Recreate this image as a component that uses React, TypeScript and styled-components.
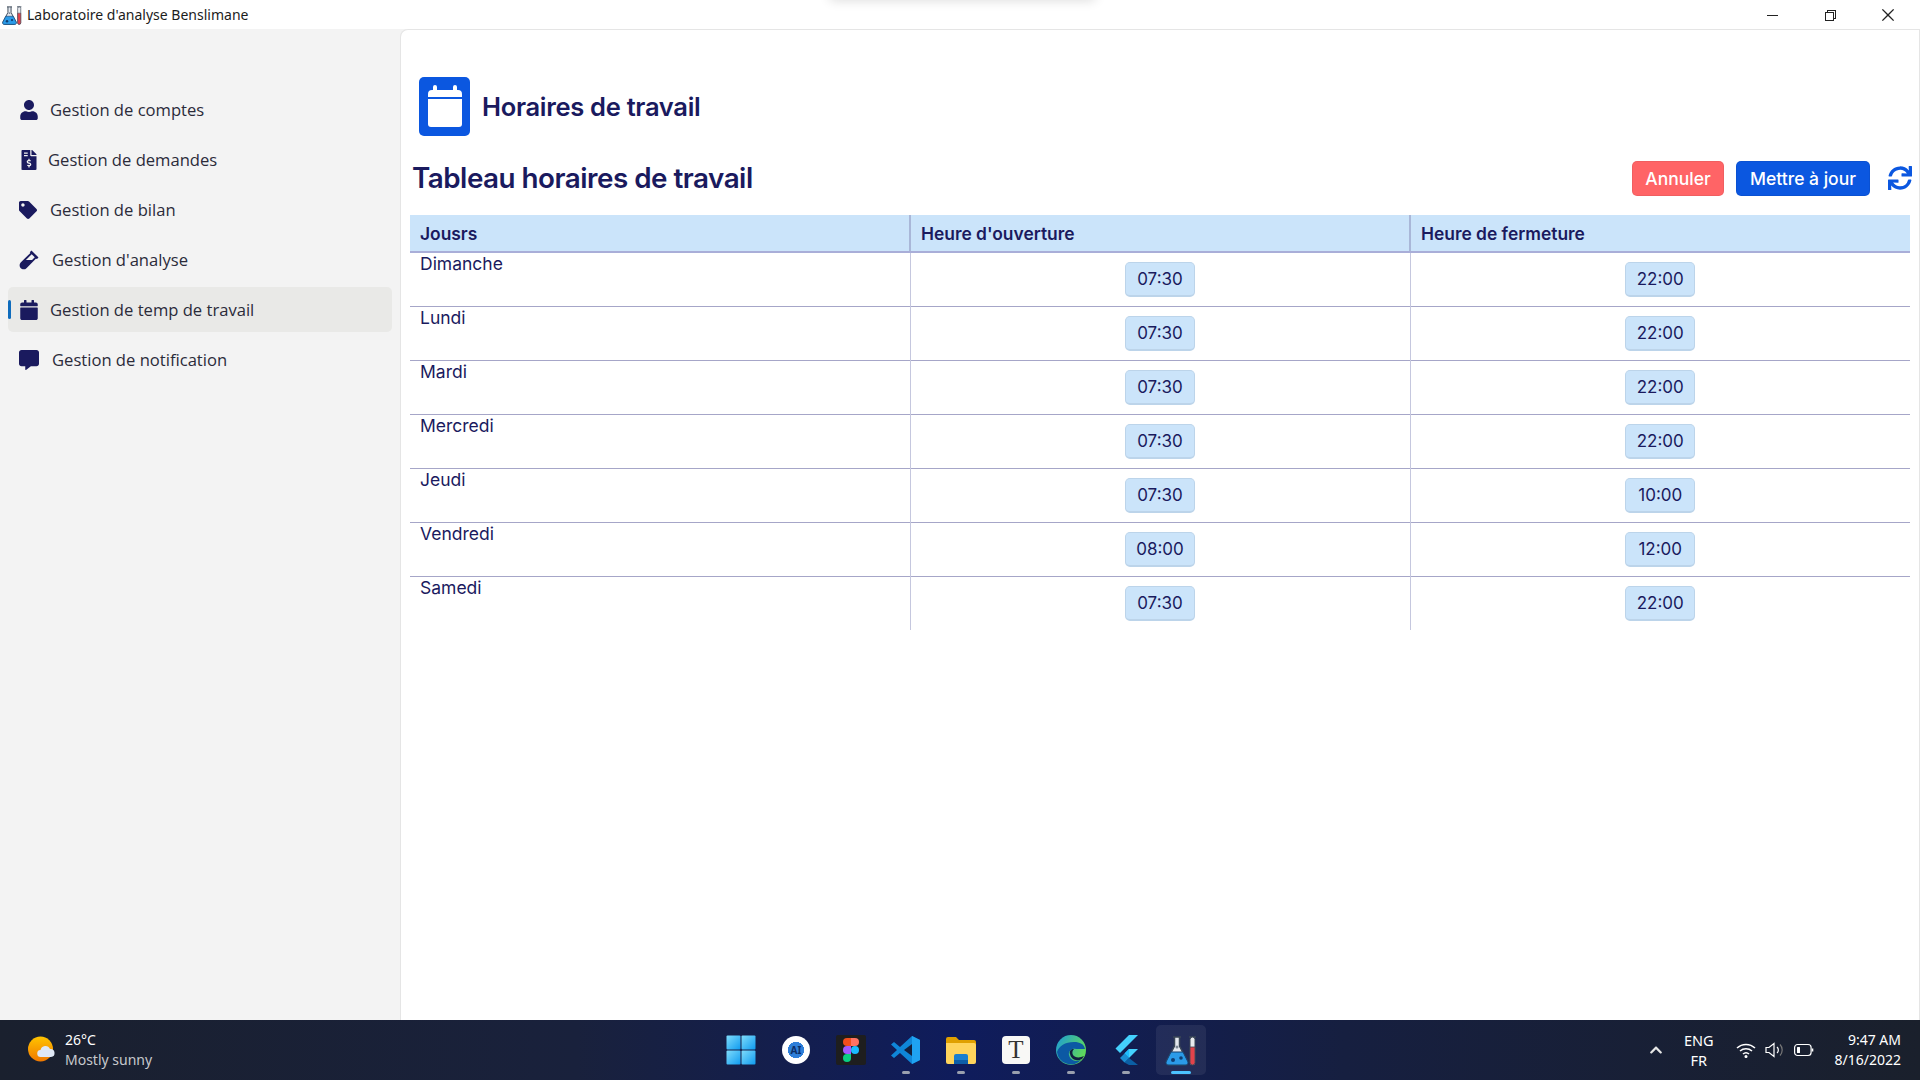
import React from 'react';
import styled, { createGlobalStyle } from 'styled-components';
import { FaUser, FaFileInvoiceDollar, FaTag, FaVial, FaCalendar, FaCommentAlt, FaSync, FaChevronUp } from 'react-icons/fa';
import { VscChromeMinimize, VscChromeRestore, VscChromeClose } from 'react-icons/vsc';

const GlobalStyle = createGlobalStyle`
  html, body {
    height: 100%;
    margin: 0;
    overflow: hidden;
  }
  * { box-sizing: border-box; }
`;

const NAVY = '#1a1a5e';
const BLUE = '#0b57e0';

const Page = styled.div`
  display: flex;
  flex-direction: column;
  width: 1920px;
  height: 1080px;
  background: #f3f3f3;
  font-family: "Open Sans", "Noto Sans", sans-serif;
`;

const TitleBar = styled.div`
  position: relative;
  display: flex;
  align-items: center;
  height: 29px;
  flex: none;
  background: #fff;
  padding-left: 2px;
  overflow: hidden;
`;

const TopShadow = styled.div`
  position: absolute;
  left: 830px;
  top: -10px;
  width: 265px;
  height: 10px;
  box-shadow: 0 0 12px rgba(0, 0, 0, 0.16);
`;

const TitleText = styled.span`
  margin-left: 5px;
  font-size: 14px;
  color: #1c1c1c;
  font-family: "Noto Sans", sans-serif;
`;

const WindowButtons = styled.div`
  display: flex;
  margin-left: auto;
  padding-right: 3px;
`;

const WindowButton = styled.div`
  display: flex;
  align-items: center;
  justify-content: center;
  width: 58px;
  height: 29px;
  font-size: 16px;
  color: #222;
`;

const Body = styled.div`
  display: flex;
  flex: 1;
  min-height: 0;
`;

const Sidebar = styled.nav`
  display: flex;
  flex-direction: column;
  width: 400px;
  flex: none;
  padding: 58px 8px 0;
  gap: 5px;
`;

const NavItem = styled.div<{ $active?: boolean; $gap: number }>`
  position: relative;
  display: flex;
  align-items: center;
  gap: ${(p) => p.$gap}px;
  height: 45px;
  padding-left: 11px;
  border-radius: 5px;
  background: ${(p) => (p.$active ? '#e9e9e7' : 'transparent')};
  color: #2b2b3a;
  font-size: 16.6px;
  svg { color: ${NAVY}; flex: none; }
  ${(p) =>
    p.$active &&
    `&::before {
      content: '';
      position: absolute;
      left: 0;
      top: 13px;
      width: 3px;
      height: 19px;
      border-radius: 2px;
      background: #0f6cbd;
    }`}
`;

const Content = styled.main`
  flex: 1;
  min-width: 0;
  background: #fff;
  border-top: 1px solid #e5e5e5;
  border-left: 1px solid #e5e5e5;
  border-right: 1px solid #e5e5e5;
  border-top-left-radius: 8px;
  padding: 48px 9px 0;
  font-family: Inter, "Noto Sans", sans-serif;
  color: ${NAVY};
`;

const PageHeader = styled.div`
  display: flex;
  align-items: center;
  gap: 12px;
  padding-left: 9px;
  height: 56px;
`;

const HeaderIcon = styled.div`
  display: flex;
  align-items: center;
  justify-content: center;
  flex: none;
  width: 51px;
  height: 59px;
  border-radius: 5px;
  background: ${BLUE};
`;

const PageTitle = styled.h1`
  margin: 0;
  font-size: 25.5px;
  font-weight: 600;
  letter-spacing: -0.3px;
`;

const ToolRow = styled.div`
  display: flex;
  align-items: center;
  height: 36px;
  margin-top: 26px;
  margin-bottom: 19px;
  padding-left: 2px;
`;

const TableTitle = styled.h2`
  margin: 0 auto 0 0;
  font-size: 27.8px;
  font-weight: 600;
  letter-spacing: -0.5px;
`;

const ActionButton = styled.button<{ $bg: string; $w: number }>`
  width: ${(p) => p.$w}px;
  height: 35px;
  margin-right: 12px;
  border: 1px solid rgba(0, 0, 0, 0.06);
  border-radius: 5px;
  background: ${(p) => p.$bg};
  color: #fff;
  font-family: inherit;
  font-size: 17.5px;
  font-weight: 500;
  padding: 0;
`;

const RefreshIcon = styled.div`
  display: flex;
  margin: 0 -2px 0 6px;
  color: ${BLUE};
`;

const Table = styled.table`
  width: 1500px;
  border-collapse: collapse;
  table-layout: fixed;
`;

const HeadCell = styled.th`
  height: 37px;
  padding: 0 10px;
  background: #cbe4fa;
  text-align: left;
  font-size: 17.4px;
  font-weight: 600;
  border-bottom: 2px solid #a9aed8;
  border-left: 2px solid #a9b7d8;
  &:first-child { border-left: none; }
`;

const Row = styled.tr`
  height: 54px;
  border-bottom: 1px solid #a6a6c8;
  &:last-child { border-bottom: none; }
`;

const DayCell = styled.td`
  padding: 0 10px;
  vertical-align: top;
  font-size: 17.5px;
  line-height: 22px;
`;

const TimeCell = styled.td`
  text-align: center;
  vertical-align: middle;
  border-left: 1px solid #c5c7de;
  padding: 0;
`;

const TimeChip = styled.span`
  display: inline-flex;
  align-items: center;
  justify-content: center;
  width: 70px;
  height: 35px;
  border-radius: 5px;
  border: 1px solid #bcd4ea;
  border-bottom-width: 2px;
  background: #cbe4fa;
  font-size: 17px;
  vertical-align: middle;
`;

const Taskbar = styled.footer`
  position: relative;
  display: flex;
  align-items: center;
  height: 60px;
  flex: none;
  background: linear-gradient(90deg, #1a202e 0%, #19213c 30%, #0f1c5c 50%, #161f40 70%, #1a202c 100%);
  color: #fff;
  font-family: "Noto Sans", sans-serif;
  font-size: 14px;
`;

const Weather = styled.div`
  display: flex;
  align-items: center;
  gap: 9px;
  padding-left: 28px;
`;

const TwoLines = styled.div<{ $align?: string }>`
  display: flex;
  flex-direction: column;
  align-items: ${(p) => p.$align || 'flex-start'};
  line-height: 20px;
`;

const Muted = styled.span`
  color: #c6c8cc;
`;

const TaskIcons = styled.div`
  position: absolute;
  left: 716px;
  top: 5px;
  display: flex;
  gap: 5px;
`;

const TaskIcon = styled.div<{ $active?: boolean; $open?: boolean }>`
  position: relative;
  display: flex;
  align-items: center;
  justify-content: center;
  width: 50px;
  height: 50px;
  border-radius: 5px;
  background: ${(p) => (p.$active ? 'rgba(255,255,255,0.07)' : 'transparent')};
  ${(p) =>
    p.$open &&
    `&::after {
      content: '';
      position: absolute;
      left: ${p.$active ? 15 : 21}px;
      bottom: 1px;
      width: ${p.$active ? 20 : 8}px;
      height: 3px;
      border-radius: 2px;
      background: ${p.$active ? '#4cc2ff' : '#9aa0ae'};
    }`}
`;

const Tray = styled.div`
  display: flex;
  align-items: center;
  margin-left: auto;
  padding-right: 19px;
`;

const TrayLang = styled(TwoLines)`
  margin: 0 22px 0 21px;
  font-size: 14.5px;
`;

const TrayIcons = styled.div`
  display: flex;
  align-items: center;
  gap: 9px;
  margin-right: 21px;
`;

const FlaskLogo = ({ size }: { size: number }) => (
  <svg width={size} height={size} viewBox="0 0 32 32">
    <path d="M8 3h8M9.500 3v9L1.500 27a3 3 0 0 0 3 4h15a3 3 0 0 0 3-4l-8-15V3" fill="#e4e8ee" stroke="#3a4656" strokeWidth="1.500" />
    <path d="M6 18h12l5 10a2.500 2.500 0 0 1-3 3H4a2.500 2.500 0 0 1-3-3z" fill="#2b9be8" stroke="#14406e" strokeWidth="1" />
    <circle cx="8" cy="26" r="2" fill="#0f3f73" />
    <circle cx="16" cy="24" r="1.800" fill="#0f3f73" />
    <circle cx="12" cy="13" r="1.500" fill="#7c8794" />
    <path d="M24 3h7" stroke="#3a4656" strokeWidth="1.500" />
    <rect x="25" y="3" width="5" height="28" rx="2.500" fill="#e8eaee" stroke="#3a4656" strokeWidth="1" />
    <path d="M25 13h5v15.500a2.500 2.500 0 0 1-5 0z" fill="#e2434b" stroke="#3a4656" strokeWidth="0.800" />
  </svg>
);

const HeaderCalendar = () => (
  <svg width="34" height="42" viewBox="0 0 34 42">
    <path d="M7 0a2 2 0 0 1 2 2v3h16V2a2 2 0 0 1 4 0v3h1a4 4 0 0 1 4 4v3H0V9a4 4 0 0 1 4-4h1V2a2 2 0 0 1 2-2z" fill="#fff" />
    <path d="M0 14h34v25a3 3 0 0 1-3 3H3a3 3 0 0 1-3-3z" fill="#fff" />
  </svg>
);

const WeatherIcon = () => (
  <svg width="28" height="28" viewBox="0 0 28 28">
    <defs>
      <linearGradient id="sun" x1="0" y1="0" x2="0" y2="1">
        <stop offset="0" stopColor="#ffc400" />
        <stop offset="1" stopColor="#f07800" />
      </linearGradient>
    </defs>
    <circle cx="12.500" cy="13" r="12.500" fill="url(#sun)" />
    <path d="M13 21a3.500 3.500 0 0 1-.5-7 5 5 0 0 1 9.500-1 4 4 0 0 1 1 8z" fill="#dfe8f5" />
  </svg>
);

const WindowsLogo = () => (
  <svg width="30" height="30" viewBox="0 0 30 30">
    <defs>
      <linearGradient id="win" x1="0" y1="0" x2="1" y2="1">
        <stop offset="0" stopColor="#7fdcfb" />
        <stop offset="1" stopColor="#0f9bf0" />
      </linearGradient>
    </defs>
    <rect x="0.500" y="0.500" width="14" height="14" rx="1" fill="url(#win)" />
    <rect x="15.500" y="0.500" width="14" height="14" rx="1" fill="url(#win)" />
    <rect x="0.500" y="15.500" width="14" height="14" rx="1" fill="url(#win)" />
    <rect x="15.500" y="15.500" width="14" height="14" rx="1" fill="url(#win)" />
  </svg>
);

const StudioBadge = styled.div`
  display: flex;
  align-items: center;
  justify-content: center;
  width: 28px;
  height: 28px;
  border-radius: 50%;
  background: radial-gradient(circle, #2f7fd8 0 40%, #fff 42%);
  color: #0e2f66;
  font-size: 10px;
  font-weight: 700;
`;

const FigmaLogo = () => (
  <svg width="30" height="30" viewBox="0 0 30 30">
    <rect width="30" height="30" rx="2" fill="#1e1e1e" />
    <path d="M11 3h4v8h-4a4 4 0 0 1 0-8z" fill="#f24e1e" />
    <path d="M15 3h4a4 4 0 0 1 0 8h-4z" fill="#ff7262" />
    <path d="M11 11h4v8h-4a4 4 0 0 1 0-8z" fill="#a259ff" />
    <circle cx="19" cy="15" r="4" fill="#1abcfe" />
    <path d="M11 19h4v4a4 4 0 1 1-4-4z" fill="#0acf83" />
  </svg>
);

const VsCodeLogo = () => (
  <svg width="30" height="30" viewBox="0 0 30 30">
    <path d="M21 1l8 4v20l-8 4-12-11-6 5-3-2.500L6 15 0 9.500 3 7l6 5z" fill="#0f86d8" />
    <path d="M21 1l8 4v20l-8 4z" fill="#1fa3f2" />
    <path d="M21 9l-8 6 8 6z" fill="#12203f" />
  </svg>
);

const FolderLogo = () => (
  <svg width="30" height="28" viewBox="0 0 30 28">
    <path d="M0 3a2 2 0 0 1 2-2h8l3 3h15a2 2 0 0 1 2 2v3H0z" fill="#e0a000" />
    <path d="M0 7h28a2 2 0 0 1 2 2v17a2 2 0 0 1-2 2H2a2 2 0 0 1-2-2z" fill="#ffd45c" />
    <path d="M8 20a2 2 0 0 1 2-2h10a2 2 0 0 1 2 2v6H8z" fill="#1a7fd0" />
    <rect x="8" y="24" width="14" height="4" fill="#0d5ea8" />
  </svg>
);

const TyporaBadge = styled.div`
  display: flex;
  align-items: center;
  justify-content: center;
  width: 28px;
  height: 28px;
  border-radius: 4px;
  background: #f8f8f6;
  color: #333;
  font-family: "Liberation Serif", serif;
  font-size: 25px;
  font-weight: 400;
`;

const EdgeLogo = () => (
  <svg width="30" height="30" viewBox="0 0 30 30">
    <defs>
      <linearGradient id="edge" x1="0" y1="0" x2="1" y2="0.500">
        <stop offset="0" stopColor="#1c9ad8" />
        <stop offset="1" stopColor="#5fd95a" />
      </linearGradient>
    </defs>
    <circle cx="15" cy="15" r="15" fill="url(#edge)" />
    <path d="M1 17a14 14 0 0 0 24 8c-6 2-11 0-12-5-1-4 3-7 7-6h9C28 9 24 7 18 7 9 7 3 11 1 17z" fill="#0c59a4" />
    <path d="M14 19c1 5 6 8 12 5l2-3c-4 2-9 2-11-1-1-2-1-4 1-6-3 0-5 2-4 5z" fill="#12203f" />
  </svg>
);

const FlutterLogo = () => (
  <svg width="26" height="30" viewBox="0 0 26 30">
    <path d="M16 0h9L7 18 2.500 13.500z" fill="#44d1fd" />
    <path d="M16 14h9l-9 9-4.500-4.500z" fill="#44d1fd" />
    <path d="M11.500 18.500L16 14v9z" fill="#1fbcfd" />
    <path d="M11.500 27.500L16 23l9 7h-9z" fill="#0b5fa5" />
    <path d="M7 23l4.500-4.500L16 23l-4.500 4.500z" fill="#1a8fd4" />
  </svg>
);

const WifiIcon = () => (
  <svg width="20" height="16" viewBox="0 0 20 16" fill="none" stroke="#fff" strokeWidth="1.500">
    <path d="M1 6a13 13 0 0 1 18 0" />
    <path d="M4 9a9 9 0 0 1 12 0" />
    <path d="M7 12a4.500 4.500 0 0 1 6 0" />
    <circle cx="10" cy="14.500" r="0.800" fill="#fff" />
  </svg>
);

const VolumeIcon = () => (
  <svg width="20" height="18" viewBox="0 0 20 18" fill="none" stroke="#fff" strokeWidth="1.200">
    <path d="M1 6.500h3L9 2.500v13L4 11.500H1z" />
    <path d="M12 6a4 4 0 0 1 0 6" />
    <path d="M15 3.500a8 8 0 0 1 0 11" stroke="#777" />
  </svg>
);

const BatteryIcon = () => (
  <svg width="20" height="14" viewBox="0 0 20 14" fill="none" stroke="#fff" strokeWidth="1.200">
    <rect x="0.600" y="1.500" width="16.500" height="11" rx="3" />
    <rect x="3" y="4" width="3" height="6" rx="0.500" fill="#fff" stroke="none" />
    <path d="M18.500 5.500v3" strokeWidth="1.600" />
  </svg>
);

const navItems = [
  { label: 'Gestion de comptes', icon: <FaUser size={20} />, gap: 11 },
  { label: 'Gestion de demandes', icon: <FaFileInvoiceDollar size={20} />, gap: 9 },
  { label: 'Gestion de bilan', icon: <FaTag size={18} />, gap: 13 },
  { label: "Gestion d'analyse", icon: <FaVial size={20} />, gap: 13 },
  { label: 'Gestion de temp de travail', icon: <FaCalendar size={20} />, gap: 11, active: true },
  { label: 'Gestion de notification', icon: <FaCommentAlt size={20} />, gap: 13 },
];

const rows = [
  ['Dimanche', '07:30', '22:00'],
  ['Lundi', '07:30', '22:00'],
  ['Mardi', '07:30', '22:00'],
  ['Mercredi', '07:30', '22:00'],
  ['Jeudi', '07:30', '10:00'],
  ['Vendredi', '08:00', '12:00'],
  ['Samedi', '07:30', '22:00'],
];

export default function App() {
  return (
    <>
      <GlobalStyle />
      <Page>
        <TitleBar>
          <TopShadow />
          <FlaskLogo size={20} />
          <TitleText>Laboratoire d'analyse Benslimane</TitleText>
          <WindowButtons>
            <WindowButton><VscChromeMinimize /></WindowButton>
            <WindowButton><VscChromeRestore /></WindowButton>
            <WindowButton><VscChromeClose size={18} /></WindowButton>
          </WindowButtons>
        </TitleBar>
        <Body>
          <Sidebar>
            {navItems.map((item) => (
              <NavItem key={item.label} $active={item.active} $gap={item.gap}>
                {item.icon}
                {item.label}
              </NavItem>
            ))}
          </Sidebar>
          <Content>
            <PageHeader>
              <HeaderIcon><HeaderCalendar /></HeaderIcon>
              <PageTitle>Horaires de travail</PageTitle>
            </PageHeader>
            <ToolRow>
              <TableTitle>Tableau horaires de travail</TableTitle>
              <ActionButton $bg="#ff6466" $w={92}>Annuler</ActionButton>
              <ActionButton $bg={BLUE} $w={134}>Mettre à jour</ActionButton>
              <RefreshIcon><FaSync size={24} /></RefreshIcon>
            </ToolRow>
            <Table>
              <thead>
                <tr>
                  <HeadCell>Jousrs</HeadCell>
                  <HeadCell>Heure d'ouverture</HeadCell>
                  <HeadCell>Heure de fermeture</HeadCell>
                </tr>
              </thead>
              <tbody>
                {rows.map(([day, open, close]) => (
                  <Row key={day}>
                    <DayCell>{day}</DayCell>
                    <TimeCell><TimeChip>{open}</TimeChip></TimeCell>
                    <TimeCell><TimeChip>{close}</TimeChip></TimeCell>
                  </Row>
                ))}
              </tbody>
            </Table>
          </Content>
        </Body>
        <Taskbar>
          <Weather>
            <WeatherIcon />
            <TwoLines>
              <span>26°C</span>
              <Muted>Mostly sunny</Muted>
            </TwoLines>
          </Weather>
          <TaskIcons>
            <TaskIcon><WindowsLogo /></TaskIcon>
            <TaskIcon><StudioBadge>AI</StudioBadge></TaskIcon>
            <TaskIcon><FigmaLogo /></TaskIcon>
            <TaskIcon $open><VsCodeLogo /></TaskIcon>
            <TaskIcon $open><FolderLogo /></TaskIcon>
            <TaskIcon $open><TyporaBadge>T</TyporaBadge></TaskIcon>
            <TaskIcon $open><EdgeLogo /></TaskIcon>
            <TaskIcon $open><FlutterLogo /></TaskIcon>
            <TaskIcon $open $active><FlaskLogo size={32} /></TaskIcon>
          </TaskIcons>
          <Tray>
            <FaChevronUp size={14} color="#e6e6e6" />
            <TrayLang $align="center">
              <span>ENG</span>
              <span>FR</span>
            </TrayLang>
            <TrayIcons>
              <WifiIcon />
              <VolumeIcon />
              <BatteryIcon />
            </TrayIcons>
            <TwoLines $align="flex-end">
              <span>9:47 AM</span>
              <span>8/16/2022</span>
            </TwoLines>
          </Tray>
        </Taskbar>
      </Page>
    </>
  );
}
